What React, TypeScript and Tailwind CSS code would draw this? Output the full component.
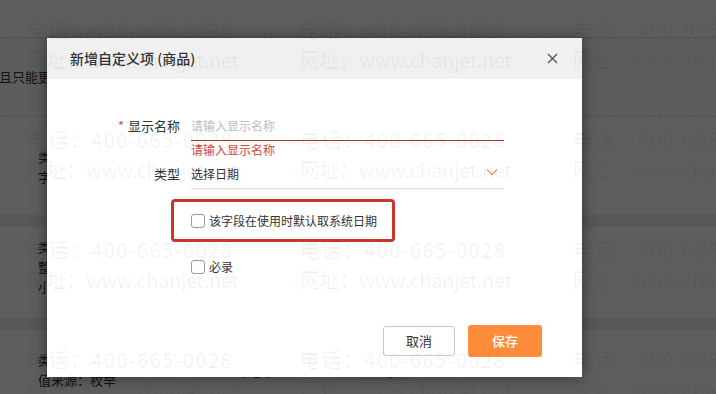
import React from "react";

const cjk = "font-['Noto_Sans_CJK_SC',sans-serif]";

function Checkbox({ label }: { label: string }) {
  return (
    <label className="flex items-center gap-[4px] h-[20px] text-[12px] text-[#333]">
      <span className="w-[14px] h-[14px] rounded-[3px] border border-[#9a9a9a] bg-white" />
      <span>{label}</span>
    </label>
  );
}

// page that sits under the mask
function BackPage() {
  return (
    <div className="flex flex-col text-[13px] leading-[20px] text-[#333]">
      <div className="h-[37px]" />
      <div className="h-[80px] border-y border-dashed border-[#b9ddcb] bg-[#f6fdf9] flex items-center">
        <span className="-ml-[1px]">且只能更改</span>
      </div>
      <div className="h-[98px] pl-[38px] pt-[30px] flex flex-col">
        <span>类型：文本</span>
        <span>字段长度：50</span>
      </div>
      <div className="h-[12px] bg-[#ececec]" />
      <div className="h-[91px] pl-[38px] pt-[10px] flex flex-col">
        <span>类型：数值</span>
        <span>整数位：12</span>
        <span>小数位：2</span>
      </div>
      <div className="h-[12px] bg-[#ececec]" />
      <div className="flex pl-[38px] pt-[20px]">
        <div className="w-[199px] flex flex-col">
          <span>类型：枚举</span>
          <span>值来源：枚举</span>
        </div>
        <div className="w-[118px] pt-[11px]">非必录</div>
        <div className="w-[108px] pt-[11px]">
          <span className="px-[17px] py-[1px] bg-[#f2f2f2]">上移</span>
        </div>
        <div className="pt-[13px]">
          <span className="block w-[12px] h-[12px] border border-[#555] rounded-[2px]" />
        </div>
      </div>
    </div>
  );
}

function Watermark() {
  const cells = Array.from({ length: 12 });
  return (
    <div className="absolute inset-0 pointer-events-none pl-[27px] pt-[15px] grid grid-cols-[repeat(3,273px)] auto-rows-[110px]">
      {cells.map((_, i) => (
        <div key={i} className="flex flex-col text-[20px] leading-[30px] text-black/[0.06] whitespace-nowrap">
          <span className="tracking-[1.4px]">电话：400-665-0028</span>
          <span className="tracking-[-0.4px]">网址：www.chanjet.net</span>
        </div>
      ))}
    </div>
  );
}

export default function App() {
  return (
    <div className={`relative w-[716px] h-[394px] overflow-hidden bg-white ${cjk}`}>
      <BackPage />
      <div className="absolute inset-0 bg-black/[0.63]" />

      <div className="absolute left-[47px] top-[38px] w-[535px] h-[339px] bg-white flex flex-col shadow-[0_0_14px_rgba(0,0,0,0.45)]">
        <div className="h-[41px] bg-[#f0f0f0] flex items-center justify-between pl-[23px] pr-[24px]">
          <span className="text-[14px] font-medium text-[#333]">新增自定义项 (商品)</span>
          <svg width="11" height="11" viewBox="0 0 11 11" fill="none" stroke="#555" strokeWidth="1.4">
            <path d="M1 1l9 9M10 1l-9 9" />
          </svg>
        </div>

        <div className="flex flex-col pt-[32px] text-[12px]">
          <div className="flex">
            <div className="w-[133px] h-[30px] flex items-center justify-end text-[13px] text-[#333]">
              <span className="text-[#d9534f] mr-[4px]">*</span>显示名称
            </div>
            <div className="ml-[11px] w-[313px] h-[30px] flex items-center border-b border-[#a8352c] text-[#bdbdbd]">
              请输入显示名称
            </div>
          </div>
          <div className="ml-[144px] h-[18px] flex items-center text-[#d2463a]">请输入显示名称</div>

          <div className="flex">
            <div className="w-[133px] h-[30px] flex items-center justify-end text-[13px] text-[#333]">类型</div>
            <div className="ml-[11px] w-[313px] h-[30px] flex items-center justify-between border-b border-[#dcdcdc] text-[#333] pr-[6px]">
              <span>选择日期</span>
              <svg width="12" height="8" viewBox="0 0 12 8" fill="none" stroke="#e3a063" strokeWidth="1.3" className="-mt-[4px]">
                <path d="M1 1.5l5 5 5-5" />
              </svg>
            </div>
          </div>

          <div className="ml-[124px] mt-[10px] w-[224px] h-[43px] border-[3px] border-[#c9372c] rounded-[4px] flex items-center pl-[17px]">
            <Checkbox label="该字段在使用时默认取系统日期" />
          </div>

          <div className="ml-[144px] mt-[15px]">
            <Checkbox label="必录" />
          </div>
        </div>

        <div className="mt-auto flex justify-end gap-[13px] pr-[40px] pb-[20px]">
          <button className="w-[72px] h-[30px] mb-[1px] self-center rounded-[3px] border border-[#c8c8c8] bg-white text-[13px] text-[#333]">
            取消
          </button>
          <button className="w-[74px] h-[32px] rounded-[3px] bg-[#ff8c3b] text-[13px] font-medium text-white">
            保存
          </button>
        </div>
      </div>

      <Watermark />
    </div>
  );
}
